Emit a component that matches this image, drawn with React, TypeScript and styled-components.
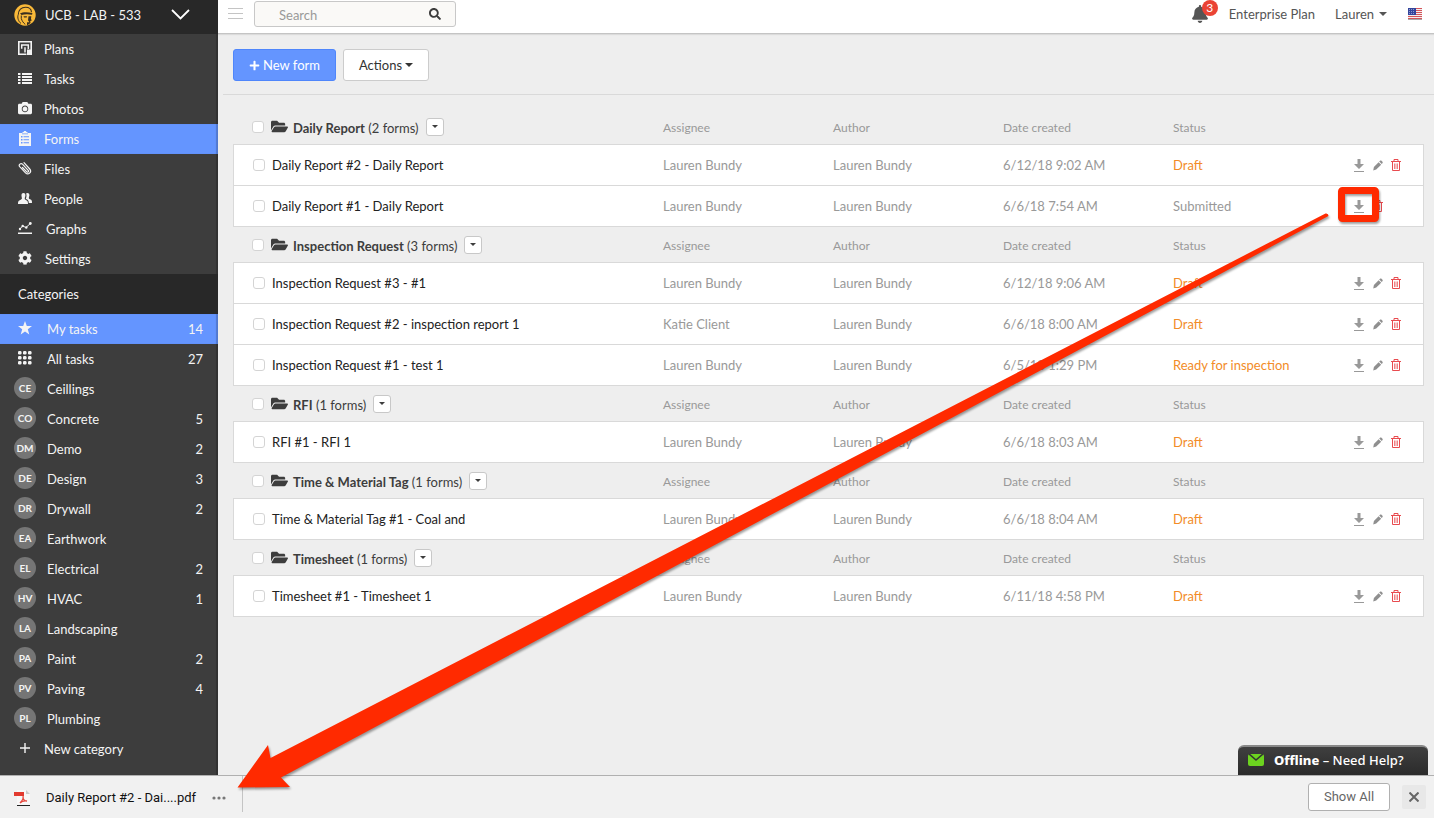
import React from "react";
import styled, { createGlobalStyle, css } from "styled-components";
import { FaCamera, FaSearch, FaBell, FaFolderOpen, FaPlus, FaCog } from "react-icons/fa";

const GlobalStyle = createGlobalStyle`
  *, *::before, *::after { box-sizing: border-box; }
  body {
    margin: 0;
    background: #eeeeee;
    color: #333;
    font-family: Lato, "Liberation Sans", sans-serif;
    font-size: 13px;
    line-height: 20px;
  }
  button, input { font: inherit; color: inherit; }
  a { color: inherit; text-decoration: none; }
`;

const Page = styled.div`
  position: relative;
  display: flex;
  flex-direction: column;
  min-height: 100vh;
  overflow: hidden;
`;

const Body = styled.div`
  display: flex;
  flex: 1;
`;

const Sidebar = styled.aside`
  width: 218px;
  flex: none;
  padding-bottom: 11px;
  background: #3d3d3d;
  color: #f4f4f4;
  box-shadow: inset -2px 0 1px #00000030;
`;

const ProjectButton = styled.button`
  display: flex;
  align-items: center;
  width: 100%;
  height: 34px;
  padding: 0 28px 5px 14px;
  border: 0;
  background: #282828;
  text-align: left;
`;

const ProjectName = styled.span`
  flex: 1;
  padding-left: 9px;
`;

const List = styled.ul`
  margin: 0;
  padding: 0;
  list-style: none;
`;

const NavLink = styled.a<{ $active?: boolean }>`
  display: flex;
  align-items: center;
  height: 30px;
  padding: 0 15px 0 12px;
  ${(p) =>
    p.$active &&
    css`
      background: #6495ff;
      box-shadow: inset -2px 0 1px #00000030;
    `}
`;

const IconSlot = styled.span<{ $gap: number }>`
  display: flex;
  align-items: center;
  justify-content: center;
  width: 26px;
  margin-right: ${(p) => p.$gap}px;
  padding-bottom: 2px;
`;

const SectionTitle = styled.h2`
  margin: 0;
  padding: 10px 18px;
  background: #282828;
  font-size: 13px;
  font-weight: 400;
`;

const CategoryName = styled.span`
  flex: 1;
`;

const Initials = styled.span`
  width: 22px;
  height: 22px;
  border-radius: 50%;
  background: #757575;
  font-size: 10px;
  font-weight: 700;
  line-height: 22px;
  text-align: center;
`;

const Main = styled.main`
  flex: 1;
  min-width: 0;
`;

const TopBar = styled.header`
  display: flex;
  align-items: center;
  height: 34px;
  padding: 0 12px 5px 10px;
  background: #fff;
  border-bottom: 1px solid #c4c4c4;
  box-shadow: 0 1px 1px #00000014;
  color: #555;
`;

const PlainButton = styled.button`
  display: inline-flex;
  align-items: center;
  padding: 0;
  border: 0;
  background: none;
`;

const SearchBox = styled.form`
  display: flex;
  align-items: center;
  width: 202px;
  height: 26px;
  margin: 0 auto 0 11px;
  padding: 0 14px 0 24px;
  border: 1px solid #c8c8c8;
  border-radius: 3px;
  background: #faf9f7;
  color: #3d3d3d;
`;

const SearchInput = styled.input`
  flex: 1;
  min-width: 0;
  padding: 2px 0 0;
  border: 0;
  outline: 0;
  background: none;
  &::placeholder { color: #999; opacity: 1; }
`;

const BellButton = styled(PlainButton)`
  position: relative;
  margin-right: 20px;
`;

const Badge = styled.span`
  position: absolute;
  top: -5px;
  left: 11px;
  width: 16px;
  height: 16px;
  border-radius: 50%;
  background: #ea4335;
  color: #fff;
  font-size: 12px;
  line-height: 16px;
  text-align: center;
`;

const UserButton = styled(PlainButton)`
  gap: 5px;
  margin: 0 21px 0 20px;
`;

const Toolbar = styled.div`
  display: flex;
  gap: 7px;
  margin-left: 5px;
  padding: 15px 10px 13px;
  border-bottom: 1px solid #d9d9d9;
`;

const ToolButton = styled.button<{ $primary?: boolean }>`
  display: flex;
  align-items: center;
  gap: 3px;
  height: 32px;
  padding: 0 15px;
  border: 1px solid ${(p) => (p.$primary ? "#4f86fb" : "#cccccc")};
  border-radius: 3px;
  background: ${(p) => (p.$primary ? "#6495ff" : "#fff")};
  color: ${(p) => (p.$primary ? "#fff" : "#333")};
`;

const Caret = styled.span<{ $small?: boolean }>`
  border: ${(p) => (p.$small ? 3 : 4)}px solid transparent;
  border-top-color: currentColor;
  border-bottom: 0;
`;

const TableArea = styled.div`
  padding: 14px 10px 40px 15px;
`;

const Forms = styled.table`
  width: 100%;
  table-layout: fixed;
  border-collapse: separate;
  border-spacing: 0;
`;

const Col = styled.col<{ $width?: number }>`
  width: ${(p) => (p.$width ? `${p.$width}px` : "auto")};
`;

const HeadCell = styled.th`
  height: 35px;
  padding: 2px 0 0;
  color: #999;
  font-size: 12px;
  font-weight: 400;
  text-align: left;
  &:first-child { padding: 0; }
`;

const GroupTitle = styled.div`
  display: flex;
  align-items: center;
  padding-left: 19px;
  color: #3d3d3d;
  font-size: 13px;
`;

const GroupName = styled.span`
  margin: 0 7px 0 5px;
  padding-top: 2px;
`;

const Checkbox = styled.input`
  appearance: none;
  flex: none;
  width: 12px;
  height: 12px;
  margin: 0 7px 0 0;
  border: 1px solid #d4d4d4;
  border-radius: 3px;
  background: #fff;
`;

const MenuButton = styled.button`
  display: flex;
  align-items: center;
  justify-content: center;
  width: 18px;
  height: 18px;
  padding: 0;
  border: 1px solid #c8c8c8;
  border-radius: 3px;
  background: #fff;
`;

const Row = styled.tr`
  td {
    height: 41px;
    padding: 0;
    background: #fff;
    border-top: 1px solid #d9d9d9;
    color: #999;
  }
  td:first-child { border-left: 1px solid #d9d9d9; }
  td:last-child { border-right: 1px solid #d9d9d9; }
  &:last-child td { height: 42px; border-bottom: 1px solid #d9d9d9; }
`;

const FormLabel = styled.label`
  display: flex;
  align-items: center;
  padding-left: 19px;
  color: #222;
`;

const Status = styled.span<{ $open: boolean }>`
  color: ${(p) => (p.$open ? "#f28c28" : "#999")};
`;

const RowActions = styled.div`
  display: flex;
  align-items: center;
  gap: 8px;
  padding-left: 1px;
`;

const HelpTab = styled.button`
  position: absolute;
  right: 6px;
  bottom: 43px;
  display: flex;
  align-items: center;
  gap: 10px;
  width: 190px;
  height: 30px;
  padding: 0 10px 2px;
  border: 0;
  border-top: 2px solid #888;
  border-radius: 6px 6px 0 0;
  background: linear-gradient(#3f3f3f, #2b2b2b);
  color: #fff;
  font-family: "Noto Sans", sans-serif;
  font-size: 13px;
  font-weight: 500;
  white-space: nowrap;
  b { font-weight: 800; }
`;

const DownloadBar = styled.footer`
  display: flex;
  align-items: center;
  height: 43px;
  padding: 0 8px 0 14px;
  background: #f1f1f1;
  border-top: 1px solid #b0b0b0;
  color: #111;
  font-family: Roboto, sans-serif;
  font-size: 13px;
`;

const DownloadItem = styled.div`
  display: flex;
  align-items: center;
  align-self: flex-start;
  height: 36px;
  margin-right: auto;
  padding: 7px 16px 0 0;
  border-right: 1px solid #c4c4c4;
`;

const FileLink = styled.a`
  display: flex;
  align-items: center;
  gap: 15px;
  margin-right: 15px;
`;

const ShowAll = styled.button`
  width: 82px;
  height: 28px;
  margin-right: 12px;
  padding: 0;
  border: 1px solid #b0b0b0;
  border-radius: 3px;
  background: #fff;
  color: #666;
`;

const CloseButton = styled(PlainButton)`
  justify-content: center;
  width: 24px;
  height: 24px;
  border-radius: 2px;
  background: #e8e8e8;
`;

const Annotation = styled.svg`
  position: absolute;
  top: 0;
  right: 0;
  pointer-events: none;
  filter: drop-shadow(1px 2px 1px #00000060);
`;

const HelmetLogo = () => (
  <svg width="22" height="22" viewBox="0 0 22 22" aria-hidden="true">
    <circle cx="11" cy="11" r="10.700" fill="#f9b939" />
    <path d="M4.300 10.500C4.300 6 7.500 3.200 11.500 3.200c3.500 0 5.800 2 6 5" fill="none" stroke="#3b2f20" strokeWidth="1.100" />
    <path d="M6 9.300c3-1.500 8.500-1.500 12.500 0l-.5 1.500c-4-1-7.500-.8-10.500.3z" fill="#3b2f20" />
    <path d="M9.500 12.300h3.500l-.3 1.200h-2.700zM14.500 12.300h2.800l-.3 2.700.8 1.500-1.500.5.2 2-3.500 2.500v-3.300h2.300l-1.300-2z" fill="#3b2f20" />
    <path d="M4.300 10.500c-1.300 3 .2 7 2.700 9M7.300 11.500v3c.7 2.500 2 4.300 4 6" fill="none" stroke="#3b2f20" strokeWidth="1" />
  </svg>
);

const PlansIcon = () => (
  <svg width="14" height="14" viewBox="0 0 14 14" aria-hidden="true">
    <path d="M8.500 13.200H.8V.8h12.400V10" fill="none" stroke="currentColor" strokeWidth="1.600" />
    <path d="M3.700 7.800V3.900h6.600v4M7 11.500V6.300" fill="none" stroke="currentColor" strokeWidth="1.500" />
    <path d="M9 8.500h5V14H9z" fill="currentColor" />
  </svg>
);

const TasksIcon = () => (
  <svg width="14" height="11" viewBox="0 0 14 11" aria-hidden="true">
    <path fill="currentColor" d="M0 0h2.500v2H0zM4 0h10v2H4zM0 3h2.500v2H0zM4 3h10v2H4zM0 6h2.500v2H0zM4 6h10v2H4zM0 9h2.500v2H0zM4 9h10v2H4z" />
  </svg>
);

const FormsIcon = () => (
  <svg width="12" height="15" viewBox="0 0 12 15" aria-hidden="true">
    <path fill="currentColor" fillRule="evenodd" d="M0 2h3.500V1h1.200a1.300 1.300 0 0 1 2.600 0h1.200v1H12v13H0zM3 3.200h6V2.400H3zM2 5v1.500h1.500V5zm2.500.2v1H10v-1zM2 8v1.500h1.500V8zm2.500.2v1H10v-1zM2 11v1.500h1.500V11zm2.500.2v1H10v-1z" />
  </svg>
);

const ClipIcon = () => (
  <svg width="14" height="14" viewBox="0 0 14 14" aria-hidden="true" fill="none" stroke="currentColor" strokeWidth="1.200" strokeLinecap="round">
    <path d="M4.500 6.500l4.300 4.300c1 1 2.400-.3 1.400-1.400L4.500 3.200C2.800 1.500.2 3.800 1.700 5.700l5.800 6.100c2.800 2.900 6.800-.8 4.200-3.800L6 1.600" />
  </svg>
);

const PeopleIcon = () => (
  <svg width="14" height="11" viewBox="0 0 14 11" aria-hidden="true" fill="currentColor">
    <path d="M5.500 0C7 0 7.600 1.200 7.400 2.800 7.200 4 6.800 4.500 6.700 5.500c0 1 .8 1.300 2 1.900 1 .5 1.300 1.300 1.300 3.600H0c0-2.300.2-3 1.300-3.600 1.200-.6 2.600-1 2.600-1.900C3.900 4.500 3.600 4 3.500 2.800 3.300 1.200 4 0 5.500 0z" />
    <path d="M8 .6c.5-.4 1-.6 1.500-.6 1.400 0 2 1.100 1.900 2.500-.1 1-.6 1.700-.6 2.500 0 .9.900 1.100 1.900 1.600 1.100.5 1.300 1.400 1.300 3.400h-3.200c-.1-2-.6-2.800-1.700-3.400-.9-.5-1.300-.7-1.200-1.200.7-1.500 1-3 .1-4.800z" />
  </svg>
);

const GraphsIcon = () => (
  <svg width="14" height="12" viewBox="0 0 14 12" aria-hidden="true" fill="currentColor">
    <path d="M0 10.500h14V12H0z" />
    <path d="M2 7 4.500 4l3.500 1.500L12.300 1.500" fill="none" stroke="currentColor" strokeWidth="1" />
    <circle cx="2" cy="7" r="1.200" /><circle cx="4.700" cy="4" r="1.200" />
    <circle cx="8.300" cy="5.500" r="1.200" /><circle cx="12.300" cy="1.500" r="1.400" />
  </svg>
);

const StarIcon = () => (
  <svg width="14" height="14" viewBox="0 0 14 14" aria-hidden="true">
    <path fill="currentColor" d="M7 0l1.800 5H14L9.800 8.300 11.300 13.500 7 10.400 2.700 13.500 4.200 8.300 0 5h5.200z" />
  </svg>
);

const GridIcon = () => (
  <svg width="14" height="14" viewBox="0 0 14 14" aria-hidden="true" fill="currentColor">
    {[0, 5, 10].map((y) => [0, 5, 10].map((x) => <rect key={`${x}-${y}`} x={x} y={y} width="3.500" height="3.500" rx="1.200" />))}
  </svg>
);

const FlagIcon = () => (
  <svg width="14" height="12" viewBox="0 0 14 12" role="img" aria-label="English (US)">
    <path fill="#f4eeee" d="M0 0h14v12H0z" />
    <path fill="#d4545a" d="M0 0h14v1H0zM0 2h14v1H0zM0 4h14v1H0zM0 6h14v1H0zM0 8h14v1H0zM0 10h14v1H0z" />
    <path fill="#34459c" d="M0 0h8v7H0z" />
    <path stroke="#8d97cc" strokeDasharray="1 1" d="M1 1.500h6M1 3.500h6M1 5.500h6" />
    <path fill="#aaa" d="M0 11h14v1H0z" />
  </svg>
);

const DownloadIcon = () => (
  <svg width="11" height="13" viewBox="0 0 11 13" aria-hidden="true">
    <path fill="#999" d="M3.500 0h3v5h3.500l-5 5-5-5h3.500zM0 12h10v1H0z" />
  </svg>
);

const PencilIcon = () => (
  <svg width="10" height="11" viewBox="0 0 10 11" aria-hidden="true" fill="#8f8f8f">
    <path d="M7 .8c.5-.5 1.200-.4 1.700.1l.8.900c.4.5.4 1-.1 1.500l-.7.700L6.200 1.600zM5.600 2.200l2.600 2.500-5 4.900L.2 10.600l.7-3.500z" />
  </svg>
);

const TrashIcon = () => (
  <svg width="10" height="12" viewBox="0 0 10 12" aria-hidden="true" fill="none" stroke="#e84b4f">
    <path d="M0 2.500h10M3 2V.5h4V2M1.500 3v8.500h7V3" />
    <path d="M3.500 4.500V10M5 4.500V10M6.500 4.500V10" strokeWidth=".7" />
  </svg>
);

const PdfIcon = () => (
  <svg width="17" height="17" viewBox="0 0 17 17" aria-hidden="true">
    <path fill="#f8f8f8" d="M3 1h9l4 4v11H3z" />
    <path fill="#ccc" d="M12 1v4h4z" />
    <path fill="#e23b30" d="M0 3h10v4H0z" />
    <path d="M9 7c1 3-1 5-3 7M9 8c0 3 2 4 4 4-3-.5-5 0-7 2" fill="none" stroke="#e8493f" strokeWidth="1.300" />
    <path fill="#222" d="M3 16h13v1H3z" />
  </svg>
);

const NAV = [
  { name: "Plans", icon: <PlansIcon />, gap: 6 },
  { name: "Tasks", icon: <TasksIcon />, gap: 6 },
  { name: "Photos", icon: <FaCamera size={14} />, gap: 6 },
  { name: "Forms", icon: <FormsIcon />, gap: 6, active: true },
  { name: "Files", icon: <ClipIcon />, gap: 6 },
  { name: "People", icon: <PeopleIcon />, gap: 6 },
  { name: "Graphs", icon: <GraphsIcon />, gap: 8 },
  { name: "Settings", icon: <FaCog size={14} />, gap: 7 },
];

const CATEGORIES: [string, string, string][] = [
  ["CE", "Ceillings", ""],
  ["CO", "Concrete", "5"],
  ["DM", "Demo", "2"],
  ["DE", "Design", "3"],
  ["DR", "Drywall", "2"],
  ["EA", "Earthwork", ""],
  ["EL", "Electrical", "2"],
  ["HV", "HVAC", "1"],
  ["LA", "Landscaping", ""],
  ["PA", "Paint", "2"],
  ["PV", "Paving", "4"],
  ["PL", "Plumbing", ""],
];

type FormRow = { title: string; assignee?: string; date: string; status?: string };

const GROUPS: { name: string; rows: FormRow[] }[] = [
  {
    name: "Daily Report",
    rows: [
      { title: "Daily Report #2 - Daily Report", date: "6/12/18 9:02 AM" },
      { title: "Daily Report #1 - Daily Report", date: "6/6/18 7:54 AM", status: "Submitted" },
    ],
  },
  {
    name: "Inspection Request",
    rows: [
      { title: "Inspection Request #3 - #1", date: "6/12/18 9:06 AM" },
      { title: "Inspection Request #2 - inspection report 1", assignee: "Katie Client", date: "6/6/18 8:00 AM" },
      { title: "Inspection Request #1 - test 1", date: "6/5/18 1:29 PM", status: "Ready for inspection" },
    ],
  },
  { name: "RFI", rows: [{ title: "RFI #1 - RFI 1", date: "6/6/18 8:03 AM" }] },
  { name: "Time & Material Tag", rows: [{ title: "Time & Material Tag #1 - Coal and", date: "6/6/18 8:04 AM" }] },
  { name: "Timesheet", rows: [{ title: "Timesheet #1 - Timesheet 1", date: "6/11/18 4:58 PM" }] },
];

export default function App() {
  return (
    <Page>
      <GlobalStyle />
      <Body>
        <Sidebar>
          <ProjectButton type="button">
            <HelmetLogo />
            <ProjectName>UCB - LAB - 533</ProjectName>
            <svg width="19" height="11" viewBox="0 0 19 11" fill="none" stroke="#fff" strokeWidth="1.800" aria-hidden="true">
              <path d="M1 1l8.500 8.500L18 1" />
            </svg>
          </ProjectButton>
          <nav>
            <List>
              {NAV.map((n) => (
                <li key={n.name}>
                  <NavLink href="#" $active={n.active}>
                    <IconSlot $gap={n.gap}>{n.icon}</IconSlot>
                    {n.name}
                  </NavLink>
                </li>
              ))}
            </List>
          </nav>
          <SectionTitle>Categories</SectionTitle>
          <List>
            <li>
              <NavLink href="#" $active>
                <IconSlot $gap={9}><StarIcon /></IconSlot>
                <CategoryName>My tasks</CategoryName>14
              </NavLink>
            </li>
            <li>
              <NavLink href="#">
                <IconSlot $gap={9}><GridIcon /></IconSlot>
                <CategoryName>All tasks</CategoryName>27
              </NavLink>
            </li>
            {CATEGORIES.map(([code, name, count]) => (
              <li key={code}>
                <NavLink href="#">
                  <IconSlot $gap={9}><Initials>{code}</Initials></IconSlot>
                  <CategoryName>{name}</CategoryName>{count}
                </NavLink>
              </li>
            ))}
            <li>
              <NavLink href="#">
                <IconSlot $gap={6}>
                  <svg width="10" height="10" viewBox="0 0 10 10" stroke="currentColor" strokeWidth="1.400" aria-hidden="true">
                    <path d="M5 0v10M0 5h10" />
                  </svg>
                </IconSlot>
                New category
              </NavLink>
            </li>
          </List>
        </Sidebar>

        <Main>
          <TopBar>
            <PlainButton type="button" aria-label="Toggle menu">
              <svg width="15" height="12" viewBox="0 0 15 12" stroke="#c4c4c4" aria-hidden="true">
                <path d="M0 .5h15M0 5.500h15M0 10.500h15" />
              </svg>
            </PlainButton>
            <SearchBox>
              <SearchInput type="text" placeholder="Search" aria-label="Search" />
              <PlainButton type="button" aria-label="Search"><FaSearch size={12} /></PlainButton>
            </SearchBox>
            <BellButton type="button" aria-label="Notifications">
              <FaBell size={18} />
              <Badge>3</Badge>
            </BellButton>
            <a href="#">Enterprise Plan</a>
            <UserButton type="button">Lauren <Caret /></UserButton>
            <FlagIcon />
          </TopBar>

          <Toolbar>
            <ToolButton type="button" $primary><FaPlus size={11} />New form</ToolButton>
            <ToolButton type="button">Actions<Caret /></ToolButton>
          </Toolbar>

          <TableArea>
            <Forms>
              <colgroup>
                <Col />
                <Col $width={170} />
                <Col $width={170} />
                <Col $width={170} />
                <Col $width={180} />
                <Col $width={71} />
              </colgroup>
              {GROUPS.map((g) => (
                <React.Fragment key={g.name}>
                  <tbody>
                    <tr>
                      <HeadCell scope="col">
                        <GroupTitle>
                          <Checkbox type="checkbox" aria-label={`Select all in ${g.name}`} />
                          <FaFolderOpen size={17} />
                          <GroupName><b>{g.name}</b> ({g.rows.length} forms)</GroupName>
                          <MenuButton type="button" aria-label={`${g.name} menu`}><Caret $small /></MenuButton>
                        </GroupTitle>
                      </HeadCell>
                      <HeadCell scope="col">Assignee</HeadCell>
                      <HeadCell scope="col">Author</HeadCell>
                      <HeadCell scope="col">Date created</HeadCell>
                      <HeadCell scope="col">Status</HeadCell>
                      <HeadCell as="td" />
                    </tr>
                  </tbody>
                  <tbody>
                    {g.rows.map((r) => (
                      <Row key={r.title}>
                        <td><FormLabel><Checkbox type="checkbox" />{r.title}</FormLabel></td>
                        <td>{r.assignee ?? "Lauren Bundy"}</td>
                        <td>Lauren Bundy</td>
                        <td>{r.date}</td>
                        <td><Status $open={r.status !== "Submitted"}>{r.status ?? "Draft"}</Status></td>
                        <td>
                          <RowActions>
                            <PlainButton type="button" aria-label="Download"><DownloadIcon /></PlainButton>
                            {r.status !== "Submitted" && (
                              <PlainButton type="button" aria-label="Edit"><PencilIcon /></PlainButton>
                            )}
                            <PlainButton type="button" aria-label="Delete"><TrashIcon /></PlainButton>
                          </RowActions>
                        </td>
                      </Row>
                    ))}
                  </tbody>
                </React.Fragment>
              ))}
            </Forms>
          </TableArea>
        </Main>
      </Body>

      <HelpTab type="button">
        <svg width="16" height="12" viewBox="0 0 16 12" aria-hidden="true">
          <rect width="16" height="12" rx="2" fill="#6cd31f" />
          <path d="M1 0l7 6 7-6" fill="none" stroke="#333" strokeWidth="1.600" />
        </svg>
        <span><b>Offline</b> – Need Help?</span>
      </HelpTab>

      <DownloadBar>
        <DownloadItem>
          <FileLink href="#"><PdfIcon />Daily Report #2 - Dai....pdf</FileLink>
          <PlainButton type="button" aria-label="More options">
            <svg width="15" height="4" viewBox="0 0 15 4" fill="#777" aria-hidden="true">
              <circle cx="3" cy="2" r="1.600" /><circle cx="8" cy="2" r="1.600" /><circle cx="13" cy="2" r="1.600" />
            </svg>
          </PlainButton>
        </DownloadItem>
        <ShowAll type="button">Show All</ShowAll>
        <CloseButton type="button" aria-label="Close">
          <svg width="10" height="10" viewBox="0 0 10 10" stroke="#666" strokeWidth="2" aria-hidden="true">
            <path d="M.5.5l9 9M9.500.5l-9 9" />
          </svg>
        </CloseButton>
      </DownloadBar>

      <Annotation width="1434" height="818" viewBox="0 0 1434 818" aria-hidden="true">
        <path fill="#ff2a00" d="M237.500 787.500L268 745l2.500 13L1325.500 213.500q3-.5 3 2.500L281 777.500l9 9.500z" />
        <rect x="1341.500" y="190.500" width="34" height="28" rx="1" fill="none" stroke="#ff2a00" strokeWidth="7" />
      </Annotation>
    </Page>
  );
}
